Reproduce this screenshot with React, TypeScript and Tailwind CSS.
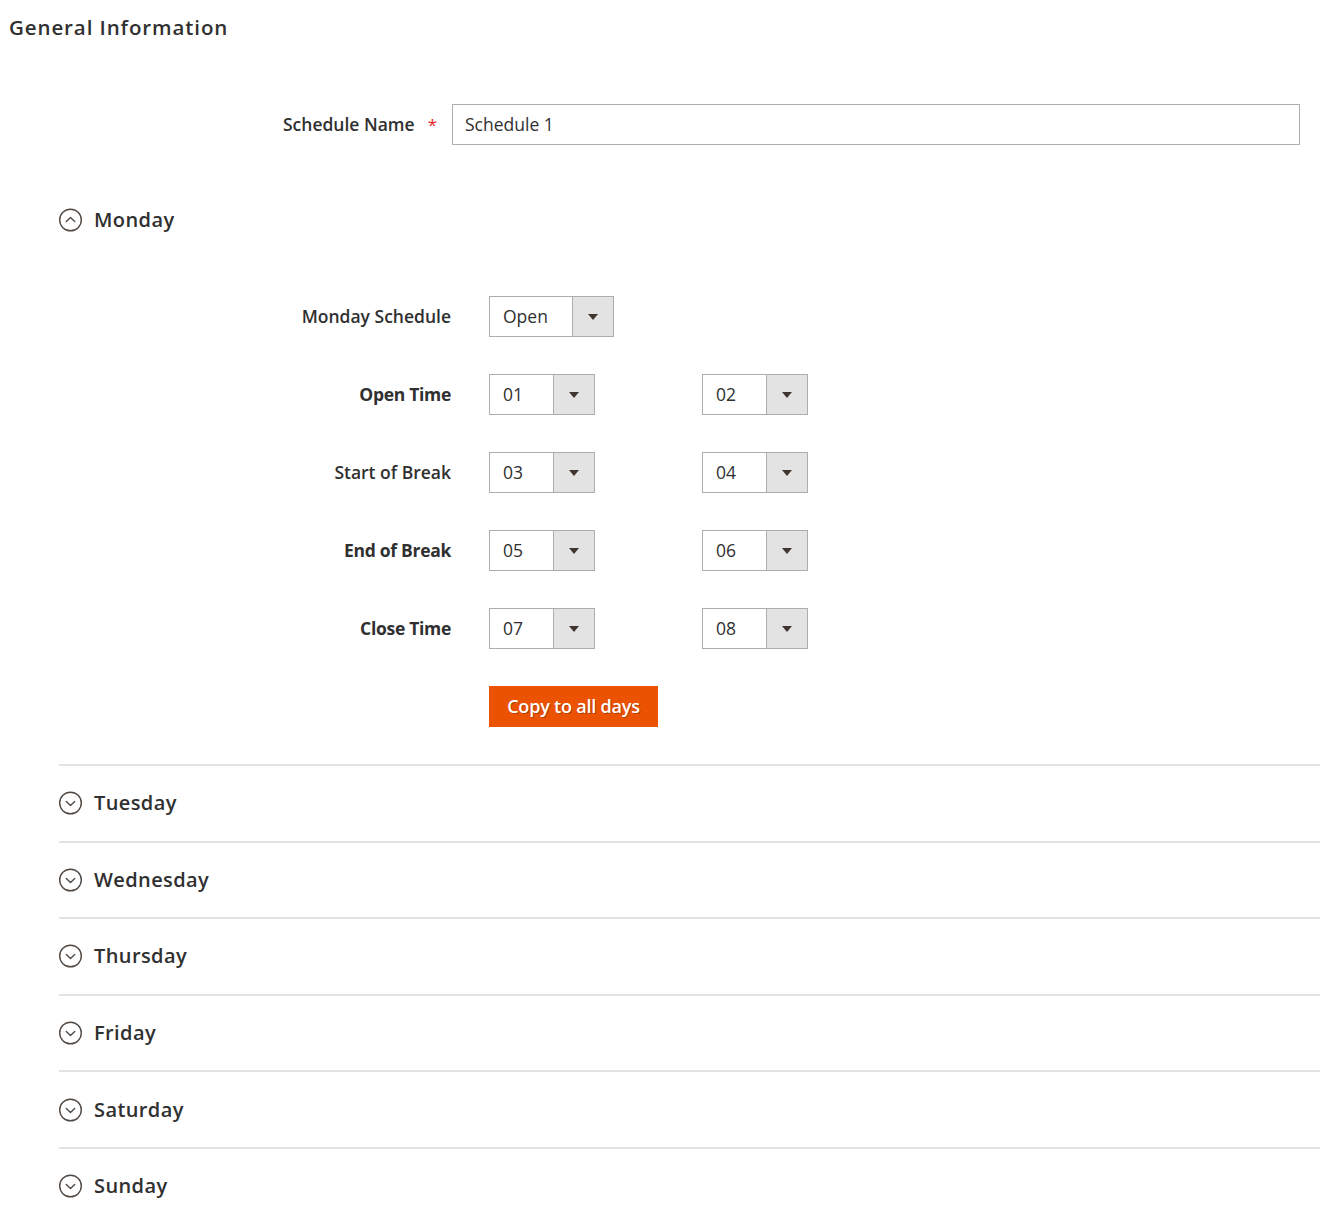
import React from "react";

const days = ["Tuesday", "Wednesday", "Thursday", "Friday", "Saturday", "Sunday"];

function CircleChevron({ up = false }: { up?: boolean }) {
  return (
    <svg width="24" height="24" viewBox="0 0 24 24" fill="none" className="shrink-0">
      <circle cx="11.5" cy="12" r="10.8" stroke="#514943" strokeWidth="1.4" />
      {up ? (
        <path d="M7.3 13.6 L11.5 9.6 L15.7 13.6" stroke="#514943" strokeWidth="1.4" strokeLinecap="round" strokeLinejoin="round" />
      ) : (
        <path d="M7.3 10.4 L11.5 14.4 L15.7 10.4" stroke="#514943" strokeWidth="1.4" strokeLinecap="round" strokeLinejoin="round" />
      )}
    </svg>
  );
}

function Select({ value, wide = false }: { value: string; wide?: boolean }) {
  return (
    <div
      className={`flex h-[41px] border border-[#adadad] bg-white ${wide ? "w-[125px]" : "w-[106px]"}`}
    >
      <div className="flex flex-1 items-center pl-[13px] text-[17.5px] text-[#303030]">{value}</div>
      <div className="flex w-[41px] items-center justify-center border-l border-[#adadad] bg-[#e3e3e3]">
        <svg width="10" height="6" viewBox="0 0 10 6">
          <path d="M0 0 L10 0 L5 6 Z" fill="#41362f" />
        </svg>
      </div>
    </div>
  );
}

function TimeRow({ label, a, b, bold = false }: { label: string; a: string; b: string; bold?: boolean }) {
  return (
    <div className="flex items-center">
      <div
        className={`w-[392px] text-right text-[17.5px] text-[#303030] ${bold ? "font-bold tracking-[-0.3px]" : "font-semibold"}`}
      >
        {label}
      </div>
      <div className="ml-[38px] flex gap-[107px]">
        <Select value={a} />
        <Select value={b} />
      </div>
    </div>
  );
}

export default function App() {
  return (
    <div className="min-h-[1215px] w-[1320px] bg-white font-['Open_Sans',sans-serif] text-[#303030]">
      <h2 className="pl-[9px] pt-[12px] text-[20.5px] font-semibold leading-[30px] tracking-[0.9px] text-[#303030]">
        General Information
      </h2>

      <div className="mt-[62px] flex items-center pr-[20px]">
        <div className="flex w-[452px] items-center justify-end pr-[15px]">
          <span className="text-[17.5px] font-semibold">Schedule Name</span>
          <span className="ml-[13px] text-[17px] text-[#e22626]">*</span>
        </div>
        <div className="flex h-[41px] flex-1 items-center border border-[#adadad] pl-[12px] text-[17.5px]">
          Schedule 1
        </div>
      </div>

      <div className="pl-[59px]">
        <div className="mt-[60px] flex items-center gap-[11px]">
          <CircleChevron up />
          <span className="text-[20px] font-semibold tracking-[0.4px] text-[#303030]">Monday</span>
        </div>

        <div className="mt-[61px] flex flex-col gap-[37px]">
          <div className="flex items-center">
            <div className="w-[392px] text-right text-[17.5px] font-semibold">Monday Schedule</div>
            <div className="ml-[38px]">
              <Select value="Open" wide />
            </div>
          </div>
          <TimeRow label="Open Time" a="01" b="02" bold />
          <TimeRow label="Start of Break" a="03" b="04" />
          <TimeRow label="End of Break" a="05" b="06" bold />
          <TimeRow label="Close Time" a="07" b="08" bold />
          <div className="ml-[430px]">
            <button className="h-[41px] w-[169px] bg-[#eb5202] text-[18px] font-semibold tracking-[-0.2px] text-white [text-shadow:1px_1px_0_rgba(0,0,0,0.25)]">
              Copy to all days
            </button>
          </div>
        </div>

        <div className="mt-[37px]">
          {days.map((d) => (
            <div key={d} className="flex h-[76.6px] items-center gap-[11px] border-t-2 border-[#e3e3e3]">
              <CircleChevron />
              <span className="text-[20px] font-semibold tracking-[0.4px] text-[#303030]">{d}</span>
            </div>
          ))}
        </div>
      </div>
    </div>
  );
}
